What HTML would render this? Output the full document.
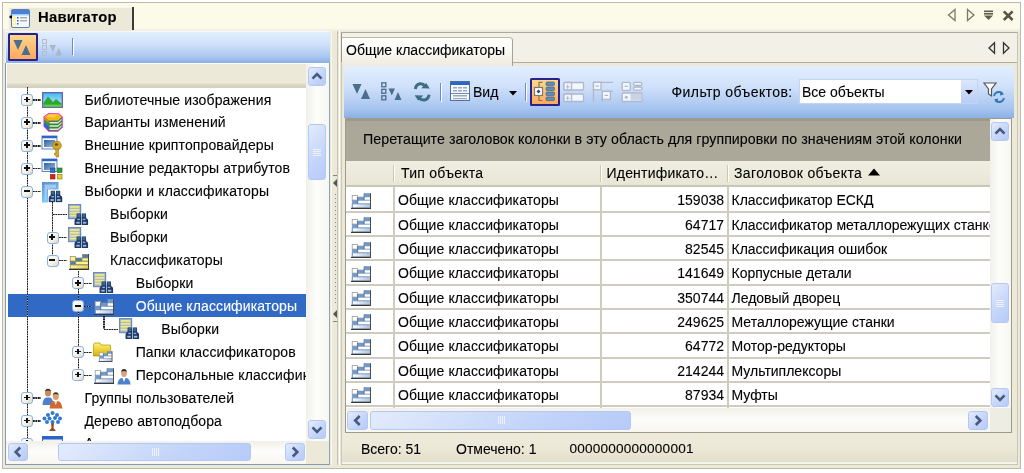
<!DOCTYPE html><html><head><meta charset="utf-8"><style>
*{box-sizing:border-box;margin:0;padding:0}
html,body{width:1024px;height:473px;overflow:hidden;background:#fff;font-family:"Liberation Sans",sans-serif;font-size:14px;color:#000}
.a{position:absolute}
.t{position:absolute;white-space:nowrap;line-height:16px;-webkit-text-stroke:0.1px currentColor}
svg.i{position:absolute;overflow:visible}
.sb{position:absolute;border:1px solid #B4C8F6;border-radius:3px;background:linear-gradient(135deg,#E3EBFD,#C4D5FA 60%,#B7CBF8)}
.sbt{position:absolute;background:linear-gradient(90deg,#F1F0EA,#FDFDFB 45%,#F7F6F1)}
.sbh{position:absolute;background:linear-gradient(#F1F0EA,#FDFDFB 45%,#F7F6F1)}
.tb{position:absolute;background:linear-gradient(#E3EFFE 0%,#CFE0FA 40%,#A9C6F0 80%,#8BB0E6 100%)}
.dl{position:absolute;background-image:linear-gradient(#1A1A1A 50%,#C8C8C8 50%);background-size:1px 2.53px;width:1.3px}
.dh{position:absolute;background-image:linear-gradient(90deg,#1A1A1A 50%,#C8C8C8 50%);background-size:2.53px 1px;height:1.3px}
.bx{position:absolute;width:12px;height:12px;border:1.5px solid #8AB2E0;border-radius:3px;background:linear-gradient(135deg,#FFFFFF,#F3F1E8 60%,#DCD6C4)}
.bx:before{content:"";position:absolute;left:1.6px;top:3.6px;width:5.8px;height:1.6px;background:#111}
.bx.p:after{content:"";position:absolute;left:3.7px;top:1.5px;width:1.6px;height:5.8px;background:#111}
.gl{position:absolute;background:#CFCCBF}
</style></head><body><div id="root" style="position:absolute;left:0;top:0;width:1024px;height:473px;overflow:hidden;filter:blur(0.5px)">
<svg width="0" height="0" style="position:absolute">
<defs>
<linearGradient id="gOr" x1="0" y1="0" x2="0" y2="1"><stop offset="0" stop-color="#FFD89A"/><stop offset="1" stop-color="#FFA45E"/></linearGradient>
<linearGradient id="gSky" x1="0" y1="0" x2="0" y2="1"><stop offset="0" stop-color="#3FB8F0"/><stop offset="1" stop-color="#D8F0FF"/></linearGradient>
<linearGradient id="gPanel" x1="0" y1="0" x2="1" y2="1"><stop offset="0" stop-color="#4F86C9"/><stop offset="1" stop-color="#D4E6F8"/></linearGradient>
<linearGradient id="gWin" x1="0" y1="0" x2="1" y2="1"><stop offset="0" stop-color="#2F5E9E"/><stop offset="1" stop-color="#9DBBE0"/></linearGradient>
<linearGradient id="gBar" x1="0" y1="0" x2="1" y2="0"><stop offset="0" stop-color="#FFFFFF"/><stop offset="1" stop-color="#A9C2DE"/></linearGradient>
<linearGradient id="gBarY" x1="0" y1="0" x2="1" y2="0"><stop offset="0" stop-color="#FFF59A"/><stop offset="1" stop-color="#E8D050"/></linearGradient>
<linearGradient id="gFold" x1="0" y1="0" x2="0" y2="1"><stop offset="0" stop-color="#FFF27A"/><stop offset="1" stop-color="#D9B000"/></linearGradient>

<symbol id="sClsW" viewBox="0 0 20 16">
 <g stroke="#7C9AC0" stroke-width="0.6">
 <rect x="13.5" y="0.4" width="5.8" height="3.6" fill="#6F9BCB"/>
 <rect x="1.2" y="2.5" width="5.3" height="4.6" fill="#FFFFFF" stroke="#9C9C9C" stroke-width="0.8"/>
 <rect x="6.8" y="4" width="6.2" height="3.4" fill="#6F9BCB"/>
 <rect x="13" y="4" width="6.3" height="3" fill="#FFFFFF"/>
 <rect x="1.2" y="7.3" width="5.3" height="3.5" fill="#6F9BCB"/>
 <rect x="6.8" y="7.4" width="12.5" height="3.2" fill="#FFFFFF"/>
 <rect x="1.2" y="11" width="18.1" height="3.8" fill="url(#gBar)"/>
 </g>
 <rect x="0.8" y="10.8" width="1" height="4" fill="#6F9BCB"/>
 <rect x="0" y="14.8" width="20" height="1.2" fill="#3A3A3A"/>
 <rect x="19" y="0.4" width="1.1" height="14.5" fill="#4A4A4A"/>
 <rect x="6.4" y="4" width="0.7" height="6.8" fill="#556070"/>
 <rect x="12.7" y="0.4" width="0.7" height="6.8" fill="#556070"/>
</symbol>
<symbol id="sClsY" viewBox="0 0 20 16">
 <g stroke="#8A8A60" stroke-width="0.7">
 <rect x="13.5" y="0.4" width="5.8" height="3.6" fill="#4A7BB3"/>
 <rect x="1.2" y="2.5" width="5.3" height="4.5" fill="#FFF48A"/>
 <rect x="6.8" y="4" width="6.2" height="3.4" fill="#4A7BB3"/>
 <rect x="13" y="4" width="6.3" height="3" fill="#FFF48A"/>
 <rect x="1.2" y="7.3" width="5.3" height="3.5" fill="#4A7BB3"/>
 <rect x="6.8" y="7.4" width="12.5" height="3.2" fill="#FFF48A"/>
 <rect x="1.2" y="11" width="18.1" height="3.8" fill="url(#gBarY)"/>
 </g>
 <rect x="0" y="14.8" width="20" height="1.3" fill="#333"/>
 <rect x="19" y="0" width="1.2" height="15" fill="#444"/>
</symbol>
<symbol id="sBinoc" viewBox="0 0 14 12">
 <path d="M2.3 0.5 Q2.3 0 2.8 0 L6 0 Q6.5 0 6.5 0.5 L6.7 5 L6.7 11.2 Q6.7 11.7 6.2 11.7 L0.6 11.7 Q0 11.7 0 11 L0 7.5 Q0 6.5 1.2 5.5 L2.2 4.8 Z" fill="#1D3A66"/>
 <path d="M7.5 0.5 Q7.5 0 8 0 L11.2 0 Q11.7 0 11.7 0.5 L11.8 4.8 L12.8 5.5 Q14 6.5 14 7.5 L14 11 Q14 11.7 13.4 11.7 L7.8 11.7 Q7.3 11.7 7.3 11.2 L7.3 5 Z" fill="#1D3A66"/>
 <rect x="3" y="0.8" width="2.8" height="3.2" fill="#3C6296"/>
 <rect x="8.2" y="0.8" width="2.8" height="3.2" fill="#3C6296"/>
 <rect x="3" y="5.5" width="2.6" height="1.4" fill="#8FB0D8"/>
 <rect x="8.4" y="5.5" width="2.6" height="1.4" fill="#8FB0D8"/>
 <rect x="2" y="8.6" width="3.4" height="1.8" fill="#9DBBE2"/>
 <rect x="8.6" y="8.6" width="3.4" height="1.8" fill="#9DBBE2"/>
</symbol>
<symbol id="sDocB" viewBox="0 0 21 22">
 <rect x="0.6" y="0.6" width="12" height="14" fill="#A9B6C2" stroke="#6A8CC0" stroke-width="1.2"/>
 <rect x="1.8" y="2" width="9.6" height="1.8" fill="#EFE88A"/>
 <rect x="1.8" y="4.9" width="9.6" height="1.8" fill="#EFE88A"/>
 <rect x="1.8" y="7.8" width="9.6" height="1.8" fill="#EFE88A"/>
 <rect x="1.8" y="10.7" width="9.6" height="1.8" fill="#EFE88A"/>
 <use href="#sBinoc" x="6.3" y="9.2" width="14" height="12"/>
</symbol>
</defs></svg>
<div class="a" style="left:2px;top:2px;width:1019px;height:467px;border:1px solid #BDBAA8;background:#ECE9D8"></div>
<div class="a" style="left:3px;top:3px;width:1017px;height:27px;background:#FCFAE8"></div>
<div class="a" style="left:3px;top:29px;width:1017px;height:2px;background:#F3F1E6"></div>
<div class="a" style="left:8px;top:7px;width:125px;height:24px;background:#ECE9D8;border-top:1px solid #F8F7F0;border-left:1px solid #F8F7F0"></div>
<div class="a" style="left:132px;top:7px;width:2px;height:23px;background:#3A3A3A"></div>
<svg class="i" style="left:10px;top:9px" width="20" height="19" viewBox="0 0 20 19">
<rect x="1.5" y="0.5" width="18" height="18" rx="1.5" fill="#F4F7FC" stroke="#5D7FAF" stroke-width="1"/>
<rect x="2" y="1" width="17" height="4" fill="#4C7FD6"/>
<rect x="2" y="5" width="17" height="1.5" fill="#9ED0F5"/>
<rect x="3" y="7" width="3" height="10" fill="#FFF7A8"/>
<rect x="7" y="8" width="1.5" height="1.5" fill="#2A5DB0"/><rect x="7" y="11" width="1.5" height="1.5" fill="#2A5DB0"/><rect x="7" y="14" width="1.5" height="1.5" fill="#2A5DB0"/>
<rect x="10" y="8.3" width="7" height="1" fill="#888"/><rect x="10" y="11.3" width="7" height="1" fill="#888"/>
<circle cx="0.8" cy="8" r="1.4" fill="#000"/>
</svg>
<div class="t" style="left:37.5px;top:9px;font-weight:bold;font-size:14px;letter-spacing:0.2px;transform:scaleX(1.06);transform-origin:0 0">Навигатор</div>
<svg class="i" style="left:946px;top:8px" width="70" height="14" viewBox="0 0 70 14">
<path d="M9 1.5 L2.5 7 L9 12.5 Z" fill="none" stroke="#7B7968" stroke-width="1.3"/>
<path d="M21.5 1.5 L28 7 L21.5 12.5 Z" fill="none" stroke="#7B7968" stroke-width="1.3"/>
<rect x="38" y="2.5" width="9" height="1.6" fill="#5F5D50"/><rect x="38" y="5" width="9" height="1.6" fill="#5F5D50"/>
<path d="M38 7.5 L47 7.5 L42.5 12 Z" fill="#5F5D50"/>
<path d="M57.8 3.3 L66.6 12 M66.6 3.3 L57.8 12" stroke="#57554A" stroke-width="2.6"/>
</svg>
<div class="a" style="left:5px;top:62px;width:326px;height:403px;border:1px solid #7F9DB9;border-left:1.5px solid #7F9DB9;border-right:2px solid #8AA5C0;background:#fff"></div>
<div class="a" style="left:5px;top:31px;width:326px;height:1px;background:#F4F8FE"></div><div class="tb" style="left:5px;top:32px;width:326px;height:31px;border-left:1px solid #E8F1FD"></div>
<div class="a" style="left:8px;top:33px;width:30px;height:28px;border:2px solid #28238A;border-radius:1.5px;background:linear-gradient(#FFD68C,#FFA95E)"></div>
<svg class="i" style="left:13px;top:39px" width="19" height="17" viewBox="0 0 19 17">
<path d="M0.5 1 L9.5 1 L5 11 Z" fill="#4A6E8E"/><path d="M8.5 16 L17.5 16 L13 6 Z" fill="#4A6E8E"/></svg>
<svg class="i" style="left:42px;top:39px" width="22" height="18" viewBox="0 0 22 18">
<rect x="0.5" y="0.5" width="4" height="4" fill="none" stroke="#B4BED0"/><rect x="0.5" y="6.5" width="4" height="4" fill="none" stroke="#B4BED0"/><rect x="0.5" y="12.5" width="4" height="4" fill="none" stroke="#B4BED0"/>
<path d="M7.5 6 L14 6 L10.8 13 Z" fill="#A9B6C8"/><path d="M13.5 16.5 L20 16.5 L16.8 9 Z" fill="#A9B6C8"/></svg>
<div class="a" style="left:72px;top:38px;width:1px;height:17px;background:#6A8CCB"></div><div class="a" style="left:73px;top:39px;width:1px;height:17px;background:#fff"></div>
<div class="a" style="left:7px;top:63px;width:299px;height:25px;background:linear-gradient(#FFFFFF 0,#FFFFFF 1px,#ECE9D8 1px,#ECE9D8 20px,#DEDACA 21px,#D2CEBC 100%)"></div>
<div class="a" style="left:6px;top:87px;width:300px;height:354px;overflow:hidden">
<div class="a" style="left:1.5px;top:207.1px;width:300px;height:23px;background:#316AC5"></div>
<div class="dl" style="left:20.65px;top:0px;height:354px"></div>
<div class="dl" style="left:46.05px;top:115px;height:59px"></div>
<div class="dl" style="left:71.65px;top:184px;height:105px"></div>
<div class="dl" style="left:97.25px;top:229px;height:13px"></div>
<div class="dh" style="left:27.3px;top:12.35px;width:7.7px"></div>
<div class="bx p" style="left:15.3px;top:7.0px"></div>
<svg class="i" style="left:36.0px;top:5.0px" width="21" height="16" viewBox="0 0 21 16">
<rect x="0.7" y="0.7" width="19.6" height="14.6" fill="url(#gSky)" stroke="#6466B4" stroke-width="1.4"/>
<path d="M1.4 11 L6 4.5 L11 10 L14 7 L19.6 11.5 L19.6 14.6 L1.4 14.6 Z" fill="#2DA82D"/>
<path d="M1.4 12.5 L19.6 12.5 L19.6 14.6 L1.4 14.6 Z" fill="#5CCB3C"/></svg>
<div class="t" style="left:78.5px;top:4.5px;color:#000;letter-spacing:0.12px">Библиотечные изображения</div>
<div class="dh" style="left:27.3px;top:35.28px;width:7.7px"></div>
<div class="bx p" style="left:15.3px;top:29.9px"></div>
<svg class="i" style="left:36.5px;top:25.9px" width="20" height="20" viewBox="0 0 20 20">
<path d="M0.5 3.5 L5.5 0 L16 0.3 L19.8 3.8 L19.8 14.5 L15 18.8 L5.5 18.8 L0.5 13.5 Z" fill="#F020F0"/>
<path d="M1.3 3.8 L1.3 13.2 L5.8 17.8 L5.8 8 Z" fill="#30A030"/>
<path d="M1.3 3.8 L5.8 8 L5.8 10 L1.3 6.3 Z" fill="#F08020"/>
<path d="M1.3 9.5 L5.8 13 L5.8 17.8 L1.3 13.2 Z" fill="#3060E0"/>
<path d="M1.5 3.6 L5.8 0.8 L15.8 1 L19 4 L15 7.8 L5.8 7.8 Z" fill="#F4B818"/>
<path d="M5.8 7.8 L15 7.8 L19 4 L19 14.3 L15 18 L5.8 18 Z" fill="#2E8A2E"/>
<g fill="#E8E8E0"><path d="M6.5 9 L15 9 L18.5 5.8 L18.5 7.3 L15 10.6 L6.5 10.6 Z"/><path d="M6.5 12.2 L15 12.2 L18.5 9 L18.5 10.5 L15 13.8 L6.5 13.8 Z"/><path d="M6.5 15.4 L15 15.4 L18.5 12.2 L18.5 13.7 L15 17 L6.5 17 Z"/></g>
<path d="M3 3.4 L6.5 1.5 L14.5 1.7 L11 4.5 Z" fill="#FFD860" opacity="0.7"/></svg>
<div class="t" style="left:78.5px;top:27.4px;color:#000;letter-spacing:0.12px">Варианты изменений</div>
<div class="dh" style="left:27.3px;top:58.21px;width:7.7px"></div>
<div class="bx p" style="left:15.3px;top:52.9px"></div>
<svg class="i" style="left:36.0px;top:48.9px" width="22" height="22" viewBox="0 0 22 22">
<rect x="0" y="0" width="15" height="13" fill="#F4F8FD" stroke="#3C69B0" stroke-width="0.8"/>
<rect x="0" y="0" width="15" height="2.2" fill="#2C64C8"/>
<rect x="2" y="4" width="11" height="7" fill="url(#gWin)"/>
<circle cx="15" cy="9.5" r="4.3" fill="#D4A82A" stroke="#A07810" stroke-width="0.8"/>
<ellipse cx="14.5" cy="8.5" rx="1.8" ry="1.2" fill="#6B5010"/>
<path d="M13.5 13 L16.5 13 L16.5 21 L14 21 L14 19 L12.5 19 L12.5 17 L14 17 Z" fill="#D4A82A" stroke="#A07810" stroke-width="0.6"/></svg>
<div class="t" style="left:78.5px;top:50.4px;color:#000;letter-spacing:0.12px">Внешние криптопровайдеры</div>
<div class="dh" style="left:27.3px;top:81.14px;width:7.7px"></div>
<div class="bx p" style="left:15.3px;top:75.8px"></div>
<svg class="i" style="left:36.0px;top:71.8px" width="21" height="21" viewBox="0 0 21 21">
<rect x="0" y="0" width="15" height="12.5" fill="#F4F8FD" stroke="#3C69B0" stroke-width="0.8"/>
<rect x="0" y="0" width="15" height="2.2" fill="#2C64C8"/>
<rect x="2" y="4" width="11" height="7" fill="url(#gWin)"/>
<rect x="8.5" y="9" width="4.5" height="4.5" fill="#2F6FD0" stroke="#1A3A80" stroke-width="0.6"/>
<rect x="15.5" y="9" width="4.5" height="4.5" fill="#2FA02F" stroke="#1A601A" stroke-width="0.6"/>
<rect x="8.5" y="15.5" width="4.5" height="4.5" fill="#E02020" stroke="#801010" stroke-width="0.6"/>
<rect x="15.5" y="15.5" width="4.5" height="4.5" fill="#E8D020" stroke="#807010" stroke-width="0.6"/></svg>
<div class="t" style="left:78.5px;top:73.3px;color:#000;letter-spacing:0.12px">Внешние редакторы атрибутов</div>
<div class="dh" style="left:27.3px;top:104.07px;width:7.7px"></div>
<div class="bx" style="left:15.3px;top:98.7px"></div>
<svg class="i" style="left:36.0px;top:94.7px" width="21" height="21" viewBox="0 0 21 21">
<defs><linearGradient id="gBP" x1="0" y1="0" x2="0.4" y2="1"><stop offset="0" stop-color="#5B8FD2"/><stop offset="1" stop-color="#7FD0F6"/></linearGradient></defs>
<path d="M0 0 L16.5 0 L16.5 7.5 L6 7.5 L6 20.5 L0 20.5 Z" fill="url(#gBP)"/>
<path d="M2.5 2.5 L14 2.5 L14 6 L5 7 L4.5 18.5 L2.5 18.5 Z" fill="#BCD6F2" opacity="0.7"/>
<use href="#sBinoc" x="6.5" y="8.5" width="14" height="12"/></svg>
<div class="t" style="left:78.5px;top:96.2px;color:#000;letter-spacing:0.12px">Выборки и классификаторы</div>
<div class="dh" style="left:46.8px;top:127.00px;width:13.8px"></div>
<svg class="i" style="left:61.6px;top:116.7px" width="21" height="22" viewBox="0 0 21 22"><use href="#sDocB"/></svg>
<div class="t" style="left:104.1px;top:119.2px;color:#000;letter-spacing:0.12px">Выборки</div>
<div class="dh" style="left:52.8px;top:149.93px;width:7.8px"></div>
<div class="bx p" style="left:40.8px;top:144.6px"></div>
<svg class="i" style="left:61.6px;top:139.6px" width="21" height="22" viewBox="0 0 21 22"><use href="#sDocB"/></svg>
<div class="t" style="left:104.1px;top:142.1px;color:#000;letter-spacing:0.12px">Выборки</div>
<div class="dh" style="left:52.8px;top:172.86px;width:7.8px"></div>
<div class="bx" style="left:40.8px;top:167.5px"></div>
<svg class="i" style="left:62.6px;top:166.5px" width="20" height="16" viewBox="0 0 20 16"><use href="#sClsY"/></svg>
<div class="t" style="left:104.1px;top:165.0px;color:#000;letter-spacing:0.12px">Классификаторы</div>
<div class="dh" style="left:78.3px;top:195.79px;width:7.9px"></div>
<div class="bx p" style="left:66.3px;top:190.4px"></div>
<svg class="i" style="left:87.2px;top:185.4px" width="21" height="22" viewBox="0 0 21 22"><use href="#sDocB"/></svg>
<div class="t" style="left:129.7px;top:187.9px;color:#000;letter-spacing:0.12px">Выборки</div>
<div class="dh" style="left:78.3px;top:218.72px;width:7.9px"></div>
<div class="bx" style="left:66.3px;top:213.4px"></div>
<svg class="i" style="left:88.2px;top:212.4px" width="20" height="16" viewBox="0 0 20 16"><use href="#sClsW"/></svg>
<div class="t" style="left:129.7px;top:210.9px;color:#fff;letter-spacing:0.12px">Общие классификаторы</div>
<div class="dh" style="left:97.9px;top:241.65px;width:13.9px"></div>
<svg class="i" style="left:112.8px;top:231.3px" width="21" height="22" viewBox="0 0 21 22"><use href="#sDocB"/></svg>
<div class="t" style="left:155.3px;top:233.8px;color:#000;letter-spacing:0.12px">Выборки</div>
<div class="dh" style="left:78.3px;top:264.58px;width:7.9px"></div>
<div class="bx p" style="left:66.3px;top:259.2px"></div>
<svg class="i" style="left:87.2px;top:255.2px" width="21" height="21" viewBox="0 0 21 21">
<path d="M0.5 3 L1.5 1 L7 1 L8 3 L17.5 3 L18 14 L0.5 14 Z" fill="url(#gFold)" stroke="#B09000" stroke-width="0.7"/>
<use href="#sClsW" x="4.5" y="9" width="16" height="11"/></svg>
<div class="t" style="left:129.7px;top:256.7px;color:#000;letter-spacing:0.12px">Папки классификаторов</div>
<div class="dh" style="left:78.3px;top:287.51px;width:7.9px"></div>
<div class="bx p" style="left:66.3px;top:282.2px"></div>
<svg class="i" style="left:88.2px;top:281.2px" width="40" height="17" viewBox="0 0 40 17">
<use href="#sClsW" x="0" y="0" width="20" height="16"/>
<path d="M23.5 16.5 Q24 10.5 28 10 L32 10 Q36 10.5 36.5 16.5 Z" fill="#4A82CC"/>
<path d="M28.5 10 L30 14 L31.5 10 Z" fill="#fff"/>
<ellipse cx="30" cy="5.5" rx="2.8" ry="3.6" fill="#D9A47A"/>
<path d="M27 5 Q27 1 30 1 Q33 1 33 5 L32.5 3.5 Q30 2.5 27.5 3.5 Z" fill="#2A2A2A"/></svg>
<div class="t" style="left:129.7px;top:279.7px;color:#000;letter-spacing:0.12px">Персональные классификаторы</div>
<div class="dh" style="left:27.3px;top:310.44px;width:7.7px"></div>
<div class="bx p" style="left:15.3px;top:305.1px"></div>
<svg class="i" style="left:36.0px;top:301.1px" width="21" height="21" viewBox="0 0 21 21">
<path d="M0.5 17 Q0.8 10 4.5 9.5 L8 9.5 Q11 10 11.5 17 Z" fill="#4A82CC"/>
<ellipse cx="6" cy="5" rx="3" ry="3.6" fill="#C88A5A"/><path d="M3 4.5 Q3 0.8 6 0.8 Q9 0.8 9 4.5 L8.5 3 Q6 2 3.5 3 Z" fill="#3A2A1A"/>
<path d="M7.5 20.5 Q8 13.5 11.5 13 L16 13 Q19.5 13.5 20.5 20.5 Z" fill="#D06A30"/>
<path d="M12 13 L13.7 17 L15.5 13 Z" fill="#F4E0C0"/>
<ellipse cx="13.8" cy="8.5" rx="3" ry="3.6" fill="#D9A070"/><path d="M10.8 8 Q10.8 4.3 13.8 4.3 Q16.8 4.3 16.8 8 L16.3 6.5 Q13.8 5.5 11.3 6.5 Z" fill="#4A3018"/></svg>
<div class="t" style="left:78.5px;top:302.6px;color:#000;letter-spacing:0.12px">Группы пользователей</div>
<div class="dh" style="left:27.3px;top:333.37px;width:7.7px"></div>
<div class="bx p" style="left:15.3px;top:328.0px"></div>
<svg class="i" style="left:36.0px;top:324.0px" width="21" height="21" viewBox="0 0 21 21">
<path d="M9 12 L9.5 17 L7 20 L14 20 L11.5 17 L12 12 Z" fill="#9A4A20"/>
<g fill="#2F7BD0"><circle cx="10.5" cy="2" r="2"/><circle cx="6" cy="4" r="2"/><circle cx="15" cy="4" r="2"/><circle cx="2.5" cy="7.5" r="2"/><circle cx="7.5" cy="7.5" r="2"/><circle cx="13" cy="7" r="2"/><circle cx="18" cy="7.5" r="2"/><circle cx="5" cy="11" r="2"/><circle cx="10.5" cy="11" r="2"/><circle cx="16" cy="11" r="2"/></g></svg>
<div class="t" style="left:78.5px;top:325.5px;color:#000;letter-spacing:0.12px">Дерево автоподбора</div>
<div class="dh" style="left:27.3px;top:356.30px;width:7.7px"></div>
<div class="bx p" style="left:15.3px;top:350.9px"></div>
<svg class="i" style="left:36.0px;top:348.9px" width="21" height="16" viewBox="0 0 21 16">
<rect x="0.5" y="0.5" width="20" height="15" fill="#F0F4FA" stroke="#2C64C8" stroke-width="1"/>
<rect x="0.5" y="0.5" width="20" height="3" fill="#2C64C8"/>
<rect x="3" y="6" width="3" height="2" fill="#2C64C8"/><rect x="8" y="6" width="10" height="2" fill="#9A98C0"/></svg>
<div class="t" style="left:78.5px;top:348.4px;color:#000;letter-spacing:0.12px">А</div>
</div>
<div class="sbt" style="left:306px;top:64px;width:23px;height:377px"></div>
<div class="sb" style="left:308px;top:67px;width:18px;height:19px"></div>
<svg class="i" style="left:0;top:0" width="1024" height="473"><path d="M312.5 78.7 L317.0 74.2 L321.5 78.7" fill="none" stroke="#46597E" stroke-width="2.6"/></svg>
<div class="sb" style="left:308px;top:124px;width:18px;height:56px"></div>
<div class="a" style="left:313px;top:149px;width:8px;height:1px;background:#EEF4FE"></div>
<div class="a" style="left:313px;top:151px;width:8px;height:1px;background:#EEF4FE"></div>
<div class="a" style="left:313px;top:153px;width:8px;height:1px;background:#EEF4FE"></div>
<div class="a" style="left:313px;top:155px;width:8px;height:1px;background:#EEF4FE"></div>
<div class="sb" style="left:308px;top:420px;width:18px;height:19px"></div>
<svg class="i" style="left:0;top:0" width="1024" height="473"><path d="M312.5 427.3 L317.0 431.8 L321.5 427.3" fill="none" stroke="#46597E" stroke-width="2.6"/></svg>
<div class="sbh" style="left:6px;top:441px;width:300px;height:23px"></div>
<div class="sb" style="left:8px;top:443px;width:20px;height:18px"></div>
<svg class="i" style="left:0;top:0" width="1024" height="473"><path d="M20.2 447.5 L15.7 452.0 L20.2 456.5" fill="none" stroke="#46597E" stroke-width="2.6"/></svg>
<div class="sb" style="left:58px;top:443px;width:193px;height:18px"></div>
<div class="a" style="left:152px;top:448px;width:1px;height:8px;background:#EEF4FE"></div>
<div class="a" style="left:154px;top:448px;width:1px;height:8px;background:#EEF4FE"></div>
<div class="a" style="left:156px;top:448px;width:1px;height:8px;background:#EEF4FE"></div>
<div class="a" style="left:158px;top:448px;width:1px;height:8px;background:#EEF4FE"></div>
<div class="sb" style="left:285px;top:443px;width:20px;height:18px"></div>
<svg class="i" style="left:0;top:0" width="1024" height="473"><path d="M292.8 447.5 L297.3 452.0 L292.8 456.5" fill="none" stroke="#46597E" stroke-width="2.6"/></svg>
<div class="a" style="left:306px;top:441px;width:23px;height:23px;background:#ECE9D8"></div>
<div class="a" style="left:330px;top:31px;width:11px;height:434px;background:#ECE9D8"></div>
<div class="a" style="left:331px;top:31px;width:1px;height:434px;background:#F8F7F2"></div>
<div class="a" style="left:337px;top:31px;width:1px;height:434px;background:#C5C2B2"></div>
<div class="a" style="left:339px;top:31px;width:1px;height:434px;background:#FFFFFF"></div>
<div class="a" style="left:333px;top:175px;width:4px;height:1px;background:#8A8878"></div>
<div class="a" style="left:333px;top:321px;width:4px;height:1px;background:#8A8878"></div>
<svg class="i" style="left:0;top:0" width="1024" height="473"><path d="M337 179 L333 183 L337 187 Z" fill="#555"/><path d="M337 310 L333 314 L337 318 Z" fill="#555"/></svg>
<div class="a" style="left:335px;top:194px;width:1px;height:1px;background:#8A8878"></div>
<div class="a" style="left:335px;top:198px;width:1px;height:1px;background:#8A8878"></div>
<div class="a" style="left:335px;top:202px;width:1px;height:1px;background:#8A8878"></div>
<div class="a" style="left:335px;top:206px;width:1px;height:1px;background:#8A8878"></div>
<div class="a" style="left:335px;top:210px;width:1px;height:1px;background:#8A8878"></div>
<div class="a" style="left:335px;top:214px;width:1px;height:1px;background:#8A8878"></div>
<div class="a" style="left:335px;top:218px;width:1px;height:1px;background:#8A8878"></div>
<div class="a" style="left:335px;top:222px;width:1px;height:1px;background:#8A8878"></div>
<div class="a" style="left:335px;top:226px;width:1px;height:1px;background:#8A8878"></div>
<div class="a" style="left:335px;top:230px;width:1px;height:1px;background:#8A8878"></div>
<div class="a" style="left:335px;top:234px;width:1px;height:1px;background:#8A8878"></div>
<div class="a" style="left:335px;top:238px;width:1px;height:1px;background:#8A8878"></div>
<div class="a" style="left:335px;top:242px;width:1px;height:1px;background:#8A8878"></div>
<div class="a" style="left:335px;top:246px;width:1px;height:1px;background:#8A8878"></div>
<div class="a" style="left:335px;top:250px;width:1px;height:1px;background:#8A8878"></div>
<div class="a" style="left:335px;top:254px;width:1px;height:1px;background:#8A8878"></div>
<div class="a" style="left:335px;top:258px;width:1px;height:1px;background:#8A8878"></div>
<div class="a" style="left:335px;top:262px;width:1px;height:1px;background:#8A8878"></div>
<div class="a" style="left:335px;top:266px;width:1px;height:1px;background:#8A8878"></div>
<div class="a" style="left:335px;top:270px;width:1px;height:1px;background:#8A8878"></div>
<div class="a" style="left:335px;top:274px;width:1px;height:1px;background:#8A8878"></div>
<div class="a" style="left:335px;top:278px;width:1px;height:1px;background:#8A8878"></div>
<div class="a" style="left:335px;top:282px;width:1px;height:1px;background:#8A8878"></div>
<div class="a" style="left:335px;top:286px;width:1px;height:1px;background:#8A8878"></div>
<div class="a" style="left:335px;top:290px;width:1px;height:1px;background:#8A8878"></div>
<div class="a" style="left:335px;top:294px;width:1px;height:1px;background:#8A8878"></div>
<div class="a" style="left:335px;top:298px;width:1px;height:1px;background:#8A8878"></div>
<div class="a" style="left:335px;top:302px;width:1px;height:1px;background:#8A8878"></div>
<div class="a" style="left:341px;top:32px;width:677px;height:433px;border:1px solid #C9C6B6;border-top-color:#ACA899;background:#ECE9D8"></div><div class="a" style="left:341px;top:33px;width:1px;height:29px;background:#9A9788"></div>
<div class="a" style="left:342px;top:33px;width:675px;height:29px;background:#F2F0E7"></div>
<div class="a" style="left:342px;top:62px;width:675px;height:1px;background:#B1AE9E"></div>
<div class="a" style="left:342px;top:37px;width:171px;height:29px;background:linear-gradient(#FFFFFF 0%,#F9F8F3 50%,#EEEBDD 100%);border-top:1px solid #BDBAA8;border-right:1px solid #A5A292;border-radius:0 4px 0 0"></div>
<div class="t" style="left:346px;top:42px">Общие классификаторы</div>
<svg class="i" style="left:985px;top:41px" width="30" height="14" viewBox="0 0 30 14">
<path d="M9.5 1.8 L4 7 L9.5 12.2 Z" fill="none" stroke="#333" stroke-width="1.3"/>
<path d="M18.5 1.8 L24 7 L18.5 12.2 Z" fill="none" stroke="#333" stroke-width="1.3"/></svg>
<div class="tb" style="left:344px;top:66px;width:670px;height:52px"></div>
<svg class="i" style="left:352px;top:83px" width="20" height="17" viewBox="0 0 20 17">
<path d="M0.5 1 L9.5 1 L5 11 Z" fill="#4A6E8E"/><path d="M9 16 L18 16 L13.5 6 Z" fill="#4A6E8E"/></svg>
<svg class="i" style="left:381px;top:82px" width="22" height="19" viewBox="0 0 22 19">
<rect x="0.8" y="0.8" width="4" height="4" fill="none" stroke="#4A6E8E" stroke-width="1.3"/><rect x="0.8" y="7.3" width="4" height="4" fill="none" stroke="#4A6E8E" stroke-width="1.3"/><rect x="0.8" y="13.8" width="4" height="4" fill="none" stroke="#4A6E8E" stroke-width="1.3"/>
<path d="M7.5 6.5 L14 6.5 L10.8 13.5 Z" fill="#4A6E8E"/><path d="M13.5 18 L20.5 18 L17 10 Z" fill="#4A6E8E"/></svg>
<svg class="i" style="left:405px;top:76px" width="30" height="30" viewBox="0 0 30 30">
<path d="M10.3 13 Q11 8.5 15 7.8 Q18 7.5 20 9.8" fill="none" stroke="#3D6F82" stroke-width="3"/>
<path d="M16.2 12.2 L24.8 12.6 L21.2 7 Z" fill="#3D6F82"/>
<path d="M24.1 18.8 Q23.4 23.3 19.4 24 Q16.4 24.3 14.4 22" fill="none" stroke="#3D6F82" stroke-width="3"/>
<path d="M18.2 19.6 L9.6 19.2 L13.2 24.8 Z" fill="#3D6F82"/></svg>
<div class="a" style="left:440px;top:83px;width:1px;height:18px;background:#6A8CCB"></div><div class="a" style="left:441px;top:84px;width:1px;height:18px;background:#fff"></div>
<svg class="i" style="left:450px;top:81px" width="20" height="20" viewBox="0 0 20 20">
<rect x="0.5" y="0.5" width="19" height="19" fill="#F4F7FC" stroke="#4F6F9F" stroke-width="1"/>
<rect x="1" y="1" width="18" height="3" fill="#2C64C8"/>
<g fill="#9AA8BC"><rect x="3" y="6" width="4" height="1.5"/><rect x="8" y="6" width="4" height="1.5"/><rect x="13" y="6" width="4" height="1.5"/>
<rect x="3" y="9" width="4" height="1.5"/><rect x="8" y="9" width="4" height="1.5"/><rect x="13" y="9" width="4" height="1.5"/></g>
<rect x="1" y="12" width="18" height="0.8" fill="#4F6F9F"/>
<g fill="#9AA8BC"><rect x="3" y="14" width="14" height="1.5"/><rect x="3" y="17" width="14" height="1.2"/></g></svg>
<div class="t" style="left:473px;top:84px">Вид</div>
<svg class="i" style="left:509px;top:91px" width="8" height="5" viewBox="0 0 8 5"><path d="M0 0 L8 0 L4 4.5 Z" fill="#000"/></svg>
<div class="a" style="left:525px;top:83px;width:1px;height:18px;background:#6A8CCB"></div><div class="a" style="left:526px;top:84px;width:1px;height:18px;background:#fff"></div>
<div class="a" style="left:530px;top:78px;width:30px;height:28px;border:2px solid #28238A;border-radius:1.5px;background:linear-gradient(#FFD68C,#FFA95E)"></div>
<svg class="i" style="left:530px;top:78px" width="30" height="28" viewBox="0 0 30 28">
<path d="M12.5 4.3 L9 4.3 L9 22.5 L12.5 22.5" fill="none" stroke="#7A7A70" stroke-width="1.2"/>
<rect x="4.5" y="9.5" width="8" height="8" fill="#fff" stroke="#7A7A70" stroke-width="1.2"/>
<path d="M8.5 11.5 L10.5 13.5 L8.5 15.5 L6.5 13.5 Z" fill="#2A4A7A"/>
<g fill="#5E8DBA" stroke="#4A6A8A" stroke-width="0.8"><rect x="16" y="4" width="8.5" height="3.6" rx="1.2"/><rect x="16" y="9" width="8.5" height="3.6" rx="1.2"/><rect x="16" y="14" width="8.5" height="3.6" rx="1.2"/><rect x="16" y="19" width="8.5" height="3.6" rx="1.2"/></g></svg>
<svg class="i" style="left:560px;top:80px" width="86" height="24" viewBox="0 0 86 24">
<g fill="#F2F6FD" stroke="#AEB8CA" stroke-width="1.3">
<rect x="4" y="2.5" width="19.5" height="7.5" rx="1"/><rect x="4" y="2.5" width="7.5" height="7.5" rx="1"/>
<rect x="4" y="14" width="19.5" height="7.5" rx="1"/><rect x="4" y="14" width="7.5" height="7.5" rx="1"/>
</g>
<g fill="#AEB8CA"><path d="M6 6.2 h3.5 v1 h-3.5z M7.2 4.5 h1 v4.4 h-1z"/><path d="M6 17.7 h3.5 v1 h-3.5z M7.2 16 h1 v4.4 h-1z"/></g>
<g fill="none" stroke="#AEB8CA" stroke-width="1.3">
<path d="M33.5 2 L33.5 21.5 M33.5 2.3 L53 2.3 M42.3 11.3 L53 11.3 M42.3 11.3 L42.3 21.5"/>
</g>
<g fill="#F2F6FD" stroke="#AEB8CA" stroke-width="1.3"><rect x="33.5" y="2.3" width="7.5" height="7.5"/><rect x="42.3" y="11.3" width="8" height="8"/>
<rect x="62.2" y="2.3" width="8" height="8" rx="1"/><rect x="73.5" y="2.3" width="8.5" height="3.2" rx="1.5"/><rect x="73.5" y="7" width="8.5" height="3.2" rx="1.5"/>
<rect x="62.2" y="13" width="19.8" height="8.5" rx="1"/></g>
<rect x="70.5" y="14" width="11" height="6.5" fill="#C9D3E3"/>
<g fill="#AEB8CA"><rect x="35.5" y="5.5" width="3.5" height="1.2"/><rect x="44.5" y="14.8" width="3.5" height="1.2"/><rect x="64.5" y="5.7" width="3.5" height="1.2"/><circle cx="66.3" cy="17.2" r="1.5"/></g>
</svg>
<div class="t" style="left:671.5px;top:84px;letter-spacing:0.42px">Фильтр объектов:</div>
<div class="a" style="left:799px;top:79px;width:179px;height:25px;background:#fff;border:1px solid #C3D4F0"></div>
<div class="t" style="left:802px;top:84px">Все объекты</div>
<div class="a" style="left:961px;top:80px;width:16px;height:23px;background:linear-gradient(#DCE7FB,#B8CCF5)"></div>
<svg class="i" style="left:965px;top:90px" width="8" height="5" viewBox="0 0 8 5"><path d="M0 0 L8 0 L4 4.5 Z" fill="#000"/></svg>
<svg class="i" style="left:983px;top:82px" width="24" height="22" viewBox="0 0 24 22">
<path d="M1 1 L13 1 L8.5 7 L8.5 14 L5.5 12 L5.5 7 Z" fill="#fff" stroke="#555" stroke-width="1.2"/>
<path d="M11 14 Q12 10 16 10 Q18 10 19.5 11.5" fill="none" stroke="#2E78B0" stroke-width="1.8"/><path d="M17.5 9 L21 12.5 L17 13.5 Z" fill="#2E78B0"/>
<path d="M21 16 Q20 20 16 20 Q14 20 12.5 18.5" fill="none" stroke="#2E78B0" stroke-width="1.8"/><path d="M14.5 21 L11 17.5 L15 16.5 Z" fill="#2E78B0"/></svg>
<div class="a" style="left:345px;top:118px;width:667px;height:315px;border:1px solid #9D9A8A;background:#fff"></div>
<div class="a" style="left:346px;top:119px;width:644px;height:42px;background:#ACA899;border-top:2px solid #9C998A"></div>
<div class="t" style="left:363px;top:131px;font-size:14.2px;letter-spacing:0.05px">Перетащите заголовок колонки в эту область для группировки по значениям этой колонки</div>
<div class="a" style="left:346px;top:161px;width:644px;height:26px;background:linear-gradient(#EFEEE2,#E8E6D6);border-bottom:2px solid #CAC6B4"></div>
<div class="a" style="left:393px;top:165px;width:1px;height:17px;background:#CBC7B6"></div><div class="a" style="left:394px;top:165px;width:1px;height:17px;background:#fff"></div>
<div class="a" style="left:600px;top:165px;width:1px;height:17px;background:#CBC7B6"></div><div class="a" style="left:601px;top:165px;width:1px;height:17px;background:#fff"></div>
<div class="a" style="left:727px;top:165px;width:1px;height:17px;background:#CBC7B6"></div><div class="a" style="left:728px;top:165px;width:1px;height:17px;background:#fff"></div>
<div class="t" style="left:401px;top:165px;letter-spacing:0.27px">Тип объекта</div>
<div class="t" style="left:606.5px;top:165px;letter-spacing:0.2px">Идентификато…</div>
<div class="t" style="left:734px;top:165px;letter-spacing:0.37px">Заголовок объекта</div>
<svg class="i" style="left:868px;top:168px" width="12" height="8" viewBox="0 0 12 8"><path d="M0 7.5 L12 7.5 L6 0.5 Z" fill="#000"/></svg>
<div class="a" style="left:346px;top:187px;width:644px;height:221px;overflow:hidden">
<svg class="i" style="left:5px;top:5.9px" width="20" height="16" viewBox="0 0 20 16"><use href="#sClsW"/></svg>
<div class="t" style="left:51.9px;top:5.4px;letter-spacing:0.1px">Общие классификаторы</div>
<div class="t" style="left:254px;top:5.4px;width:124px;text-align:right">159038</div>
<div class="t" style="left:385.5px;top:5.4px">Классификатор ЕСКД</div>
<div class="gl" style="left:0;top:23.7px;width:644px;height:2px"></div>
<svg class="i" style="left:5px;top:30.2px" width="20" height="16" viewBox="0 0 20 16"><use href="#sClsW"/></svg>
<div class="t" style="left:51.9px;top:29.7px;letter-spacing:0.1px">Общие классификаторы</div>
<div class="t" style="left:254px;top:29.7px;width:124px;text-align:right">64717</div>
<div class="t" style="left:385.5px;top:29.7px">Классификатор металлорежущих станков</div>
<div class="gl" style="left:0;top:48.0px;width:644px;height:2px"></div>
<svg class="i" style="left:5px;top:54.5px" width="20" height="16" viewBox="0 0 20 16"><use href="#sClsW"/></svg>
<div class="t" style="left:51.9px;top:54.0px;letter-spacing:0.1px">Общие классификаторы</div>
<div class="t" style="left:254px;top:54.0px;width:124px;text-align:right">82545</div>
<div class="t" style="left:385.5px;top:54.0px">Классификация ошибок</div>
<div class="gl" style="left:0;top:72.3px;width:644px;height:2px"></div>
<svg class="i" style="left:5px;top:78.8px" width="20" height="16" viewBox="0 0 20 16"><use href="#sClsW"/></svg>
<div class="t" style="left:51.9px;top:78.3px;letter-spacing:0.1px">Общие классификаторы</div>
<div class="t" style="left:254px;top:78.3px;width:124px;text-align:right">141649</div>
<div class="t" style="left:385.5px;top:78.3px">Корпусные детали</div>
<div class="gl" style="left:0;top:96.6px;width:644px;height:2px"></div>
<svg class="i" style="left:5px;top:103.1px" width="20" height="16" viewBox="0 0 20 16"><use href="#sClsW"/></svg>
<div class="t" style="left:51.9px;top:102.6px;letter-spacing:0.1px">Общие классификаторы</div>
<div class="t" style="left:254px;top:102.6px;width:124px;text-align:right">350744</div>
<div class="t" style="left:385.5px;top:102.6px">Ледовый дворец</div>
<div class="gl" style="left:0;top:120.9px;width:644px;height:2px"></div>
<svg class="i" style="left:5px;top:127.4px" width="20" height="16" viewBox="0 0 20 16"><use href="#sClsW"/></svg>
<div class="t" style="left:51.9px;top:126.9px;letter-spacing:0.1px">Общие классификаторы</div>
<div class="t" style="left:254px;top:126.9px;width:124px;text-align:right">249625</div>
<div class="t" style="left:385.5px;top:126.9px">Металлорежущие станки</div>
<div class="gl" style="left:0;top:145.2px;width:644px;height:2px"></div>
<svg class="i" style="left:5px;top:151.7px" width="20" height="16" viewBox="0 0 20 16"><use href="#sClsW"/></svg>
<div class="t" style="left:51.9px;top:151.2px;letter-spacing:0.1px">Общие классификаторы</div>
<div class="t" style="left:254px;top:151.2px;width:124px;text-align:right">64772</div>
<div class="t" style="left:385.5px;top:151.2px">Мотор-редукторы</div>
<div class="gl" style="left:0;top:169.5px;width:644px;height:2px"></div>
<svg class="i" style="left:5px;top:176.0px" width="20" height="16" viewBox="0 0 20 16"><use href="#sClsW"/></svg>
<div class="t" style="left:51.9px;top:175.5px;letter-spacing:0.1px">Общие классификаторы</div>
<div class="t" style="left:254px;top:175.5px;width:124px;text-align:right">214244</div>
<div class="t" style="left:385.5px;top:175.5px">Мультиплексоры</div>
<div class="gl" style="left:0;top:193.8px;width:644px;height:2px"></div>
<svg class="i" style="left:5px;top:200.3px" width="20" height="16" viewBox="0 0 20 16"><use href="#sClsW"/></svg>
<div class="t" style="left:51.9px;top:199.8px;letter-spacing:0.1px">Общие классификаторы</div>
<div class="t" style="left:254px;top:199.8px;width:124px;text-align:right">87934</div>
<div class="t" style="left:385.5px;top:199.8px">Муфты</div>
<div class="gl" style="left:0;top:218.1px;width:644px;height:2px"></div>
<div class="gl" style="left:46.5px;top:0;width:2px;height:221px"></div>
<div class="gl" style="left:253.5px;top:0;width:2px;height:221px"></div>
<div class="gl" style="left:380.5px;top:0;width:2px;height:221px"></div>
</div>
<div class="sbt" style="left:990px;top:119px;width:21px;height:289px"></div>
<div class="sb" style="left:991px;top:122px;width:18px;height:19px"></div>
<svg class="i" style="left:0;top:0" width="1024" height="473"><path d="M995.5 133.7 L1000.0 129.2 L1004.5 133.7" fill="none" stroke="#46597E" stroke-width="2.6"/></svg>
<div class="sb" style="left:991px;top:283px;width:18px;height:40px"></div>
<div class="a" style="left:996px;top:300px;width:8px;height:1px;background:#EEF4FE"></div>
<div class="a" style="left:996px;top:302px;width:8px;height:1px;background:#EEF4FE"></div>
<div class="a" style="left:996px;top:304px;width:8px;height:1px;background:#EEF4FE"></div>
<div class="a" style="left:996px;top:306px;width:8px;height:1px;background:#EEF4FE"></div>
<div class="sb" style="left:991px;top:388px;width:18px;height:19px"></div>
<svg class="i" style="left:0;top:0" width="1024" height="473"><path d="M995.5 395.3 L1000.0 399.8 L1004.5 395.3" fill="none" stroke="#46597E" stroke-width="2.6"/></svg>
<div class="sbh" style="left:346px;top:408px;width:644px;height:24px"></div>
<div class="sb" style="left:347px;top:411px;width:21px;height:19px"></div>
<svg class="i" style="left:0;top:0" width="1024" height="473"><path d="M359.7 416.0 L355.2 420.5 L359.7 425.0" fill="none" stroke="#46597E" stroke-width="2.6"/></svg>
<div class="sb" style="left:370px;top:411px;width:261px;height:19px"></div>
<div class="a" style="left:498px;top:416px;width:1px;height:8px;background:#EEF4FE"></div>
<div class="a" style="left:500px;top:416px;width:1px;height:8px;background:#EEF4FE"></div>
<div class="a" style="left:502px;top:416px;width:1px;height:8px;background:#EEF4FE"></div>
<div class="a" style="left:504px;top:416px;width:1px;height:8px;background:#EEF4FE"></div>
<div class="sb" style="left:968px;top:411px;width:20px;height:19px"></div>
<svg class="i" style="left:0;top:0" width="1024" height="473"><path d="M975.8 416.0 L980.3 420.5 L975.8 425.0" fill="none" stroke="#46597E" stroke-width="2.6"/></svg>
<div class="a" style="left:990px;top:408px;width:21px;height:24px;background:#EEEDE4"></div>
<div class="a" style="left:342px;top:433px;width:675px;height:31px;background:linear-gradient(#EEEBDC,#ECE9D8 45%,#E2DFCD 92%,#F6F5EE 96%)"></div>
<div class="t" style="left:361px;top:441px">Всего: 51</div>
<div class="t" style="left:456px;top:441px">Отмечено: 1</div>
<div class="t" style="left:569.5px;top:441px;font-size:13.6px;letter-spacing:0.2px">0000000000000001</div>
</div></body></html>
